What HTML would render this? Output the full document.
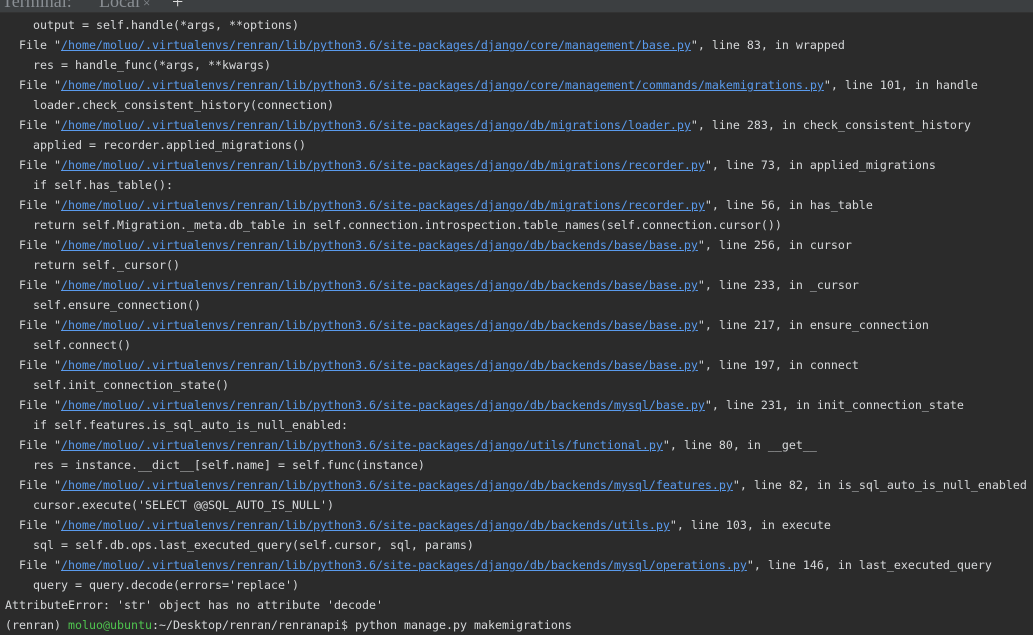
<!DOCTYPE html>
<html><head><meta charset="utf-8"><style>
html,body{margin:0;padding:0;width:1033px;height:621px;overflow:hidden;background:#2b2b2b;}
.hdr{position:absolute;left:0;top:0;width:1033px;height:12px;background:#3c3f41;border-bottom:1px solid #323232;overflow:hidden;font-family:"Liberation Serif",serif;font-size:18px;color:#8a8f94;}
.hdr span{position:absolute;top:-9px;}
.t{position:absolute;left:5px;top:15px;font-family:"DejaVu Sans Mono","Liberation Mono",monospace;font-size:11.63px;line-height:20px;color:#d6d8da;white-space:pre;}
a{color:#5a9bed;text-decoration:underline;}
</style></head><body>
<div class="hdr"><span style="left:2px">Terminal:</span><span style="left:99px">Local</span><span style="left:143px;font-size:13px;top:-5px">×</span><span style="left:172px;color:#ddd;font-size:20px;top:-9px">+</span></div>
<div class="t">    output = self.handle(*args, **options)
  File "<a>/home/moluo/.virtualenvs/renran/lib/python3.6/site-packages/django/core/management/base.py</a>", line 83, in wrapped
    res = handle_func(*args, **kwargs)
  File "<a>/home/moluo/.virtualenvs/renran/lib/python3.6/site-packages/django/core/management/commands/makemigrations.py</a>", line 101, in handle
    loader.check_consistent_history(connection)
  File "<a>/home/moluo/.virtualenvs/renran/lib/python3.6/site-packages/django/db/migrations/loader.py</a>", line 283, in check_consistent_history
    applied = recorder.applied_migrations()
  File "<a>/home/moluo/.virtualenvs/renran/lib/python3.6/site-packages/django/db/migrations/recorder.py</a>", line 73, in applied_migrations
    if self.has_table():
  File "<a>/home/moluo/.virtualenvs/renran/lib/python3.6/site-packages/django/db/migrations/recorder.py</a>", line 56, in has_table
    return self.Migration._meta.db_table in self.connection.introspection.table_names(self.connection.cursor())
  File "<a>/home/moluo/.virtualenvs/renran/lib/python3.6/site-packages/django/db/backends/base/base.py</a>", line 256, in cursor
    return self._cursor()
  File "<a>/home/moluo/.virtualenvs/renran/lib/python3.6/site-packages/django/db/backends/base/base.py</a>", line 233, in _cursor
    self.ensure_connection()
  File "<a>/home/moluo/.virtualenvs/renran/lib/python3.6/site-packages/django/db/backends/base/base.py</a>", line 217, in ensure_connection
    self.connect()
  File "<a>/home/moluo/.virtualenvs/renran/lib/python3.6/site-packages/django/db/backends/base/base.py</a>", line 197, in connect
    self.init_connection_state()
  File "<a>/home/moluo/.virtualenvs/renran/lib/python3.6/site-packages/django/db/backends/mysql/base.py</a>", line 231, in init_connection_state
    if self.features.is_sql_auto_is_null_enabled:
  File "<a>/home/moluo/.virtualenvs/renran/lib/python3.6/site-packages/django/utils/functional.py</a>", line 80, in __get__
    res = instance.__dict__[self.name] = self.func(instance)
  File "<a>/home/moluo/.virtualenvs/renran/lib/python3.6/site-packages/django/db/backends/mysql/features.py</a>", line 82, in is_sql_auto_is_null_enabled
    cursor.execute('SELECT @@SQL_AUTO_IS_NULL')
  File "<a>/home/moluo/.virtualenvs/renran/lib/python3.6/site-packages/django/db/backends/utils.py</a>", line 103, in execute
    sql = self.db.ops.last_executed_query(self.cursor, sql, params)
  File "<a>/home/moluo/.virtualenvs/renran/lib/python3.6/site-packages/django/db/backends/mysql/operations.py</a>", line 146, in last_executed_query
    query = query.decode(errors='replace')
AttributeError: 'str' object has no attribute 'decode'
(renran) <span style="color:#4fc44f">moluo@ubuntu</span>:~/Desktop/renran/renranapi$ python manage.py makemigrations</div>
</body></html>
